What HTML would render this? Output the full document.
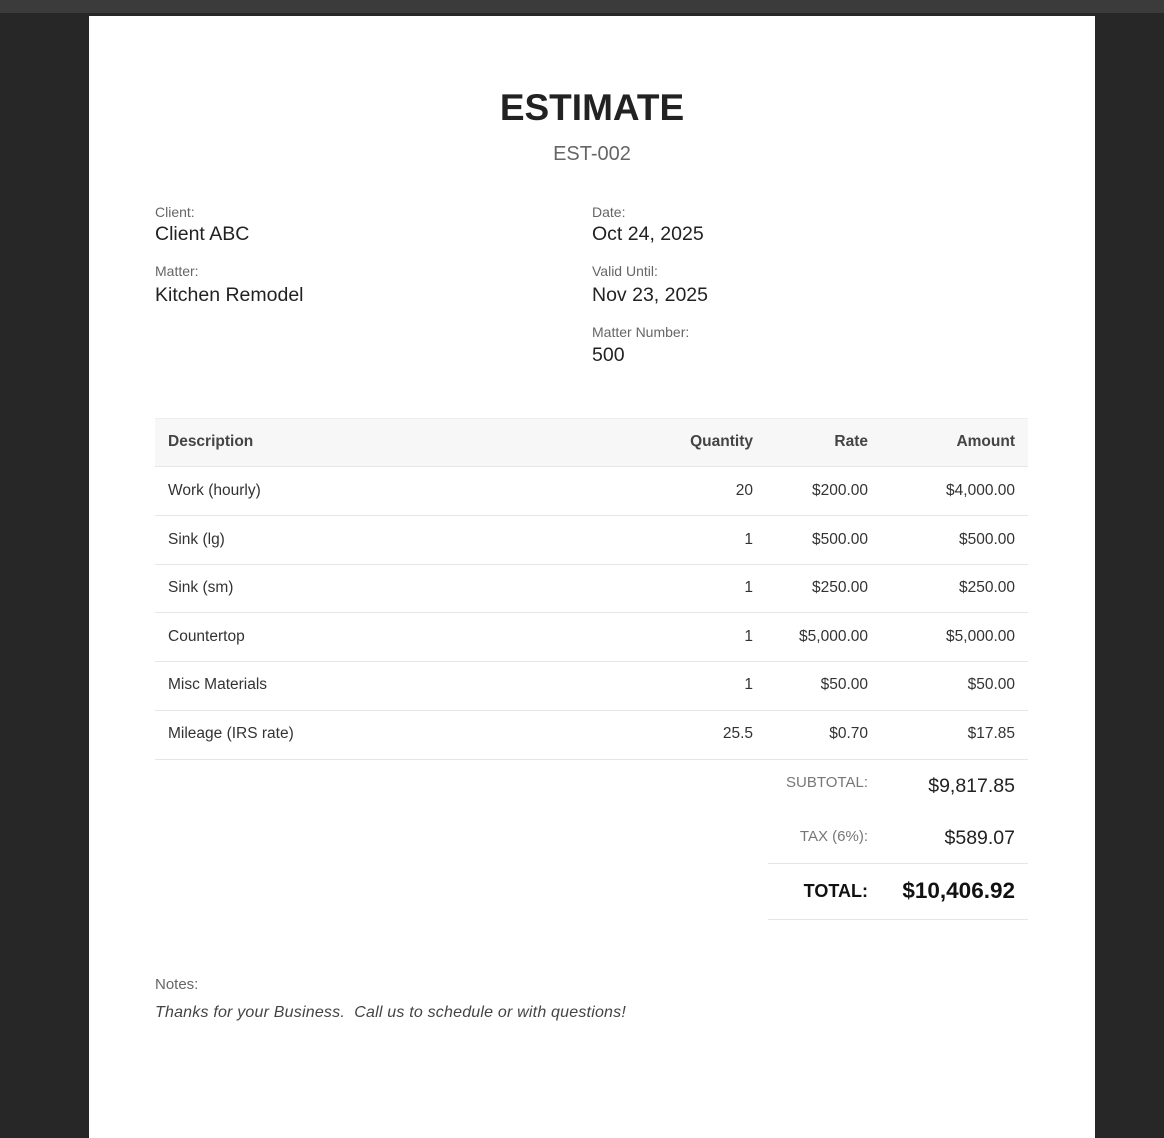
<!DOCTYPE html>
<html><head><meta charset="utf-8"><style>
*{margin:0;padding:0;box-sizing:border-box}
body{width:1164px;height:1138px;background:#272727;position:relative;overflow:hidden;font-family:"Liberation Sans",sans-serif;color:#222}
.top{position:absolute;left:0;top:0;width:1164px;height:13px;background:#3b3b3b}
.page{position:absolute;left:89px;top:16px;width:1006px;height:1122px;background:#fff}
.t{position:absolute;white-space:nowrap;line-height:20px;height:20px}
.r{text-align:right}
.lbl{font-size:14px;color:#666}
.val{font-size:19.5px;color:#222}
.cell{font-size:15.5px;color:#333}
.line{position:absolute;left:155px;width:873px;height:1px;background:#e6e6e6}
</style></head><body>
<div class="top"></div>
<div class="page"></div>
<div class="t" style="left:0;width:1184px;text-align:center;top:88px;height:40px;line-height:40px;font-size:37px;font-weight:bold;color:#222">ESTIMATE</div>
<div class="t" style="left:0;width:1184px;text-align:center;top:144px;font-size:20px;color:#666">EST-002</div>

<div class="t lbl" style="left:155px;top:202px">Client:</div>
<div class="t val" style="left:155px;top:224px">Client ABC</div>
<div class="t lbl" style="left:155px;top:261px">Matter:</div>
<div class="t val" style="left:155px;top:285px">Kitchen Remodel</div>

<div class="t lbl" style="left:592px;top:202px">Date:</div>
<div class="t val" style="left:592px;top:224px">Oct 24, 2025</div>
<div class="t lbl" style="left:592px;top:261px">Valid Until:</div>
<div class="t val" style="left:592px;top:285px">Nov 23, 2025</div>
<div class="t lbl" style="left:592px;top:322px">Matter Number:</div>
<div class="t val" style="left:592px;top:345px">500</div>

<div style="position:absolute;left:155px;top:418px;width:873px;height:48px;background:#f7f7f7;border-top:1px solid #eee"></div>
<div class="t cell" style="left:168px;top:432px;font-weight:bold;color:#444">Description</div>
<div class="t cell r" style="left:600px;width:153px;top:432px;color:#444;font-weight:bold">Quantity</div>
<div class="t cell r" style="left:760px;width:108px;top:432px;color:#444;font-weight:bold">Rate</div>
<div class="t cell r" style="left:880px;width:135px;top:432px;color:#444;font-weight:bold">Amount</div>
<div class="line" style="top:466px"></div>

<div class="t cell" style="left:168px;top:481px">Work (hourly)</div>
<div class="t cell r" style="left:600px;width:153px;top:481px">20</div>
<div class="t cell r" style="left:740px;width:128px;top:481px">$200.00</div>
<div class="t cell r" style="left:860px;width:155px;top:481px">$4,000.00</div>
<div class="line" style="top:515px"></div>

<div class="t cell" style="left:168px;top:530px">Sink (lg)</div>
<div class="t cell r" style="left:600px;width:153px;top:530px">1</div>
<div class="t cell r" style="left:740px;width:128px;top:530px">$500.00</div>
<div class="t cell r" style="left:860px;width:155px;top:530px">$500.00</div>
<div class="line" style="top:564px"></div>

<div class="t cell" style="left:168px;top:578px">Sink (sm)</div>
<div class="t cell r" style="left:600px;width:153px;top:578px">1</div>
<div class="t cell r" style="left:740px;width:128px;top:578px">$250.00</div>
<div class="t cell r" style="left:860px;width:155px;top:578px">$250.00</div>
<div class="line" style="top:612px"></div>

<div class="t cell" style="left:168px;top:627px">Countertop</div>
<div class="t cell r" style="left:600px;width:153px;top:627px">1</div>
<div class="t cell r" style="left:740px;width:128px;top:627px">$5,000.00</div>
<div class="t cell r" style="left:860px;width:155px;top:627px">$5,000.00</div>
<div class="line" style="top:661px"></div>

<div class="t cell" style="left:168px;top:675px">Misc Materials</div>
<div class="t cell r" style="left:600px;width:153px;top:675px">1</div>
<div class="t cell r" style="left:740px;width:128px;top:675px">$50.00</div>
<div class="t cell r" style="left:860px;width:155px;top:675px">$50.00</div>
<div class="line" style="top:710px"></div>

<div class="t cell" style="left:168px;top:724px">Mileage (IRS rate)</div>
<div class="t cell r" style="left:600px;width:153px;top:724px">25.5</div>
<div class="t cell r" style="left:740px;width:128px;top:724px">$0.70</div>
<div class="t cell r" style="left:860px;width:155px;top:724px">$17.85</div>
<div class="line" style="top:759px"></div>

<div class="t r" style="left:740px;width:128px;top:773px;font-size:15px;color:#777">SUBTOTAL:</div>
<div class="t r" style="left:860px;width:155px;top:776px;font-size:19.5px;color:#222">$9,817.85</div>
<div class="t r" style="left:740px;width:128px;top:827px;font-size:15px;color:#777">TAX (6%):</div>
<div class="t r" style="left:860px;width:155px;top:828px;font-size:19.5px;color:#222">$589.07</div>
<div style="position:absolute;left:768px;top:863px;width:260px;height:1px;background:#e6e6e6"></div>
<div class="t r" style="left:740px;width:128px;top:881px;font-size:18px;font-weight:bold;color:#111">TOTAL:</div>
<div class="t r" style="left:860px;width:155px;top:881px;font-size:22.5px;font-weight:bold;color:#111">$10,406.92</div>
<div style="position:absolute;left:768px;top:919px;width:260px;height:1px;background:#e6e6e6"></div>

<div class="t lbl" style="left:155px;top:975px;font-size:15px">Notes:</div>
<div class="t" style="left:155px;top:1003px;font-size:16px;font-style:italic;color:#444;letter-spacing:0.2px">Thanks for your Business.&nbsp; Call us to schedule or with questions!</div>
</body></html>
